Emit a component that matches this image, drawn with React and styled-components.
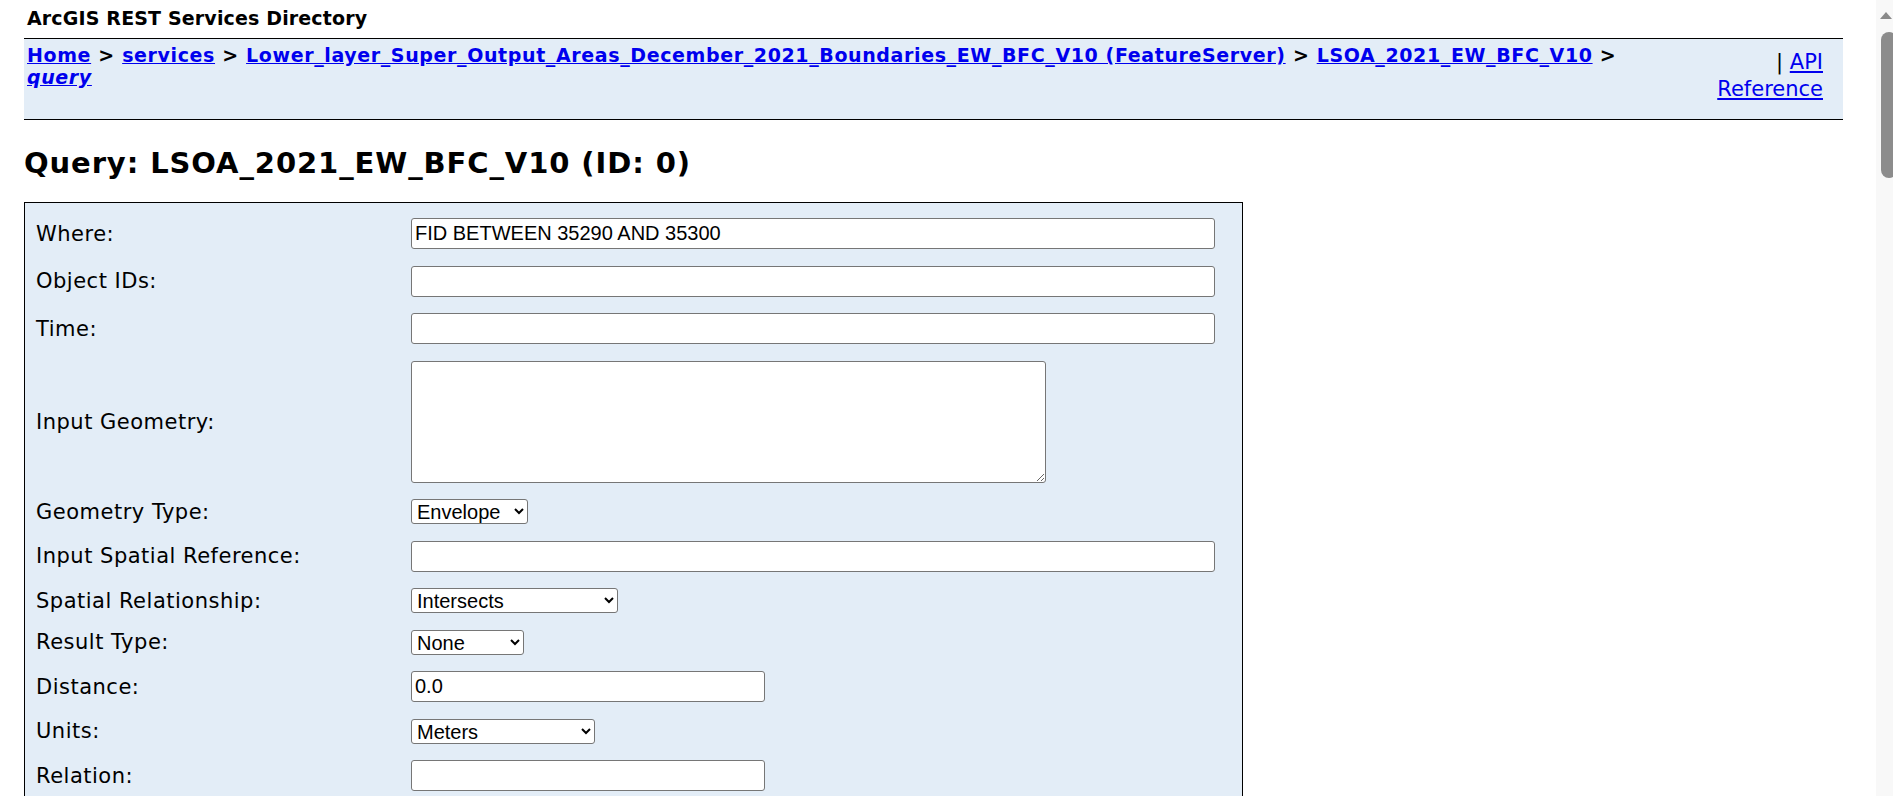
import React from "react";
import styled, { createGlobalStyle } from "styled-components";

const GlobalStyle = createGlobalStyle`
  html,
  body {
    margin: 0;
    padding: 0;
    height: 100%;
    overflow: hidden;
    background: #ffffff;
  }

  body {
    font-family: "DejaVu Sans", Verdana, sans-serif;
    color: #000000;
  }
`;

const Page = styled.div`
  padding: 7px 50px 0 24px;
`;

const SiteTitle = styled.div`
  font-size: 19px;
  font-weight: bold;
  line-height: 22px;
  letter-spacing: 0.15px;
  margin: 0 0 9px 3px;
`;

const NavBar = styled.div`
  display: flex;
  height: 82px;
  box-sizing: border-box;
  border-top: 1px solid #000000;
  border-bottom: 1px solid #000000;
  background: #e3edf7;
`;

const Crumbs = styled.div`
  flex: 1;
  padding: 5px 50px 0 3px;
  font-size: 19px;
  font-weight: bold;
  line-height: 22px;
  letter-spacing: 0.62px;

  a {
    color: #0000ee;
    text-decoration: underline;
  }

  .current {
    font-style: italic;
  }
`;

const ApiLinks = styled.div`
  width: 150px;
  flex-shrink: 0;
  box-sizing: border-box;
  padding: 10px 20px 0 0;
  text-align: right;
  font-size: 21px;
  line-height: 27px;

  a {
    color: #0000ee;
  }
`;

const Heading = styled.h2`
  margin: 26px 0 22px 0;
  font-size: 29px;
  font-weight: bold;
  line-height: 34px;
  letter-spacing: 0.9px;
`;

const FormBox = styled.div`
  width: 1219px;
  box-sizing: border-box;
  border: 1px solid #000000;
  background: #e3edf7;
  padding: 7px 0 0 11px;
`;

const Row = styled.div`
  display: flex;
  align-items: center;
  padding: 8.25px 0;
`;

const Label = styled.div`
  width: 375px;
  flex-shrink: 0;
  font-size: 21px;
  letter-spacing: 0.5px;
`;

const fieldBase = `
  box-sizing: border-box;
  margin: 0;
  border: 1px solid #767676;
  border-radius: 3px;
  background: #ffffff;
  color: #000000;
  font-family: "Liberation Sans", Arial, sans-serif;
  font-size: 20px;
`;

const TextInput = styled.input`
  ${fieldBase}
  width: ${(p) => p.$w}px;
  height: 31px;
  padding: 0 3px;
`;

const TextArea = styled.textarea`
  ${fieldBase}
  display: block;
  width: 635px;
  height: 122px;
  padding: 2px 3px;
`;

const Select = styled.select`
  ${fieldBase}
  width: ${(p) => p.$w}px;
  height: 25px;
  padding: 0 0 0 1px;
`;

const ScrollTrack = styled.div`
  position: fixed;
  top: 0;
  right: 0;
  width: 17px;
  height: 100vh;
  background: #f8f8f8;
  overflow: hidden;
`;

const ScrollArrow = styled.div`
  position: absolute;
  top: 12px;
  left: 4px;
  width: 0;
  height: 0;
  border-left: 6px solid transparent;
  border-right: 6px solid transparent;
  border-bottom: 7px solid #8a8a8a;
`;

const ScrollThumb = styled.div`
  position: absolute;
  top: 32px;
  left: 5px;
  width: 16px;
  height: 146px;
  border-radius: 8px;
  background: #8c8c8c;
`;

const fields = [
  { label: "Where:", kind: "input", w: 804, value: "FID BETWEEN 35290 AND 35300" },
  { label: "Object IDs:", kind: "input", w: 804 },
  { label: "Time:", kind: "input", w: 804 },
  { label: "Input Geometry:", kind: "textarea" },
  { label: "Geometry Type:", kind: "select", w: 117, options: ["Envelope", "Point", "Polyline", "Polygon", "Multipoint"] },
  { label: "Input Spatial Reference:", kind: "input", w: 804 },
  { label: "Spatial Relationship:", kind: "select", w: 207, options: ["Intersects", "Contains", "Crosses", "Touches", "Within"] },
  { label: "Result Type:", kind: "select", w: 113, options: ["None", "Standard", "Tile"] },
  { label: "Distance:", kind: "input", w: 354, value: "0.0" },
  { label: "Units:", kind: "select", w: 184, options: ["Meters", "Feet", "Kilometers", "Miles"] },
  { label: "Relation:", kind: "input", w: 354 },
  { label: "Return Geometry:", kind: "input", w: 354 },
  { label: "Out Fields:", kind: "input", w: 804 },
];

const Field = ({ f }) => {
  if (f.kind === "textarea") return <TextArea />;
  if (f.kind === "select")
    return (
      <Select $w={f.w} defaultValue={f.options[0]}>
        {f.options.map((o) => (
          <option key={o}>{o}</option>
        ))}
      </Select>
    );
  return <TextInput type="text" $w={f.w} defaultValue={f.value || ""} />;
};

export default function App() {
  return (
    <>
      <GlobalStyle />
      <Page>
        <SiteTitle>ArcGIS REST Services Directory</SiteTitle>
        <NavBar>
          <Crumbs>
            <a href="#">Home</a> &gt; <a href="#">services</a> &gt;{" "}
            <a href="#">
              Lower_layer_Super_Output_Areas_December_2021_Boundaries_EW_BFC_V10
              (FeatureServer)
            </a>{" "}
            &gt; <a href="#">LSOA_2021_EW_BFC_V10</a> &gt;{" "}
            <a href="#" className="current">
              query
            </a>
          </Crumbs>
          <ApiLinks>
            | <a href="#">API Reference</a>
          </ApiLinks>
        </NavBar>
        <Heading>Query: LSOA_2021_EW_BFC_V10 (ID: 0)</Heading>
        <FormBox>
          {fields.map((f) => (
            <Row key={f.label}>
              <Label>{f.label}</Label>
              <Field f={f} />
            </Row>
          ))}
        </FormBox>
      </Page>
      <ScrollTrack>
        <ScrollArrow />
        <ScrollThumb />
      </ScrollTrack>
    </>
  );
}
